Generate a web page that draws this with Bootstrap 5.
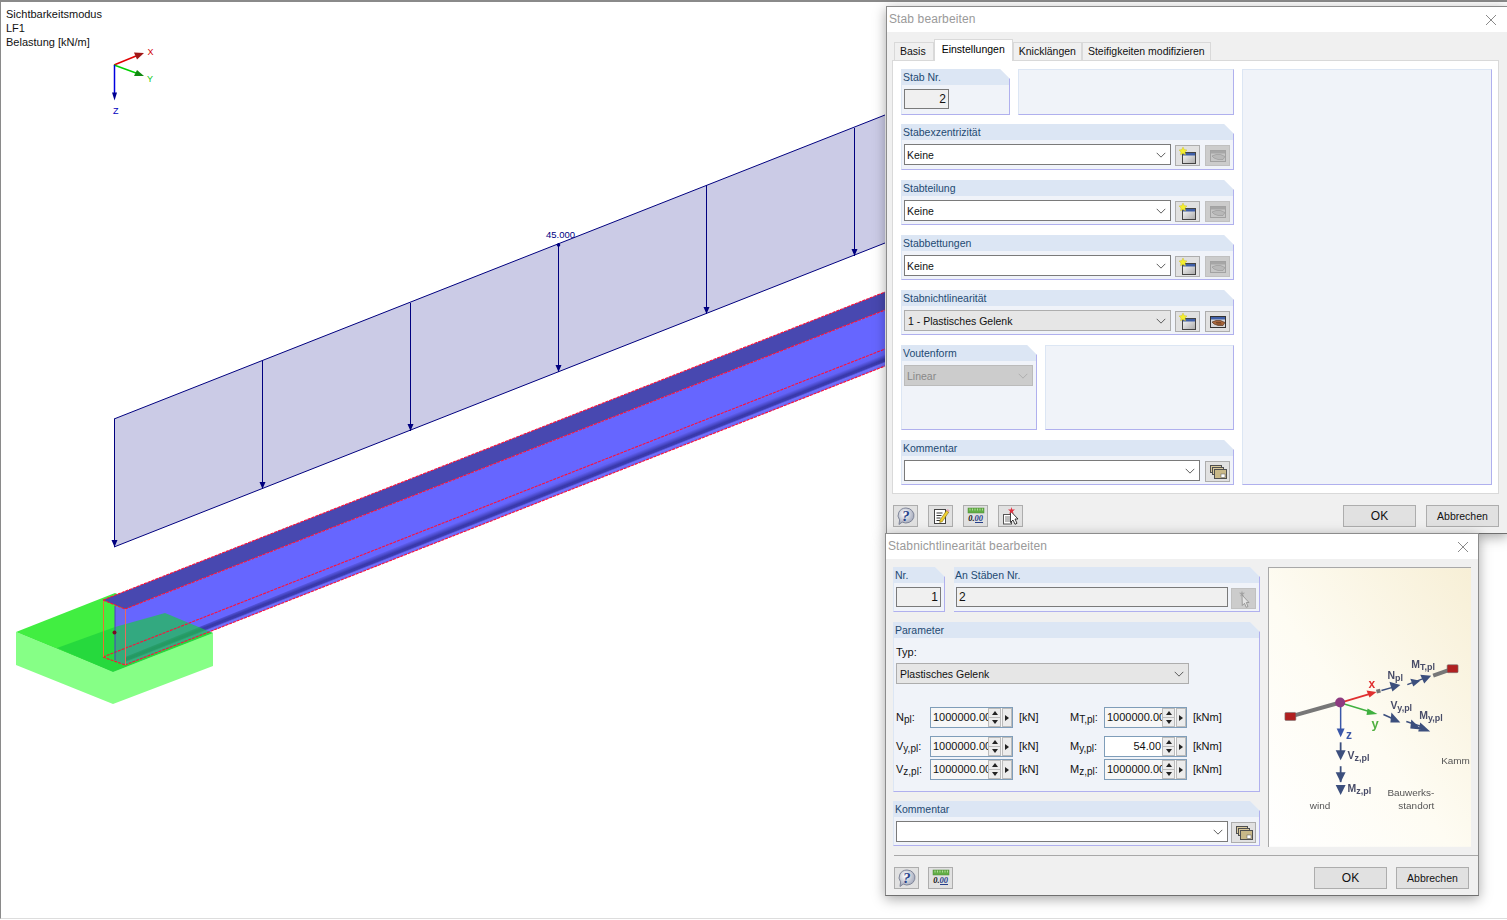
<!DOCTYPE html>
<html lang="de">
<head>
<meta charset="utf-8">
<title>Stab bearbeiten</title>
<link href="https://cdn.jsdelivr.net/npm/bootstrap@5.3.0/dist/css/bootstrap.min.css" rel="stylesheet">
<style>
html,body{height:920px;overflow:hidden;background:#fff;}
body{font-family:"Liberation Sans",Arial,sans-serif;font-size:11px;color:#111;line-height:1.2;}
.stage{position:relative;width:1507px;height:920px;overflow:hidden;}
.view3d{display:block;width:1507px;height:919px;border-left:1px solid #8a8a8a;border-top:2px solid #8a8a8a;border-bottom:1px solid #ddd;box-sizing:border-box;}
.vinfo{position:absolute;left:6px;top:7px;font-size:11px;line-height:14px;color:#111;}
.dlg{position:absolute;background:#f0f0f0;box-shadow:0 3px 12px rgba(0,0,0,.35);border:1px solid #8c8c8c;border-bottom-color:#6f6f6f;font-size:10.5px;}
.dlg-a{left:886px;top:6px;width:622px;height:528px;}
.dlg-b{left:885px;top:533px;width:594px;height:363px;}
.dlg-t{background:#fff;height:25px;padding:0 0 0 2px;color:#9a9a9a;font-size:12px;letter-spacing:.12px;}
.dlg-x{width:12px;height:12px;}
.dlg-a .dlg-x{margin-right:10px;}
.dlg-b .dlg-x{margin-right:9px;}
.dlg-a .dlg-c{padding:7px 8px 0 5px;}
.dlg-b .dlg-c{padding:8px 0 0 7px;}
.tabbar{border:0;margin-left:2px;height:21px;align-items:flex-end;}
.tabbar .nav-link{border:1px solid #d9d9d9;border-bottom:0;border-radius:0;background:#f0f0f0;color:#111;padding:0 5px;height:18px;line-height:17px;font-size:10.5px;margin:0;}
.tabbar .tab-first{padding:0 7px 0 5px;}
.tabbar .nav-link.active{background:#fff;height:22px;line-height:18px;padding:0 7px 0 7px;margin-bottom:-1px;position:relative;z-index:1;border-color:#d9d9d9;}
.tabbody{width:607px;height:434px;background:#fff;border:1px solid #d9d9d9;padding:8px 6px 8px 8px;}
.colmain{width:333px;}
.colside{width:250px;}
.fgrp{background:#f0f3f9;border-right:1px solid #b0b0ee;border-bottom:1px solid #b0b0ee;border-left:1px solid #dce6f4;clip-path:polygon(0 0,calc(100% - 10px) 0,100% 10px,100% 100%,0 100%);flex:none;}
.fgrp.noleft{border-left:0;}
.fgrp-h{height:16px;line-height:16px;background:#dce6f4;color:#1e4a72;padding-left:1px;font-size:10.5px;}
.fgrp-b{padding:4px 3px 0 2px;}
.fgrp-b .ibtn{margin-top:1px;height:21px;}
.blank{background:#f0f3f9;border:1px solid #dce6f4;border-right-color:#b0b0ee;border-bottom-color:#b0b0ee;flex:none;}
.h45{height:45px;}
.h46{height:46px;}
.h85{height:85px;}
.h170{height:170px;}
.w109{width:109px;}
.w216{width:216px;}
.w136{width:136px;}
.w189{width:189px;}
.w52{width:52px;}
.w306{width:306px;}
.w367{width:367px;}
.w293{width:293px;}
.mt9{margin-top:9px;}
.mt10{margin-top:10px;}
.gap3{gap:3px;}
.gap4{gap:4px;}
.gap5{gap:5px;}
.gap9{gap:9px;}
.gap10{gap:10px;}
.ml1{margin-left:1px;}
.form-select.combo,.form-control.fld{border-radius:0;border:1px solid #7a7a7a;height:21px;min-height:0;font-size:10.5px;line-height:1;color:#111;padding:1px 18px 0 2px;box-shadow:none;font-family:inherit;}
.form-select.combo{background-image:url("data:image/svg+xml,%3csvg xmlns='http://www.w3.org/2000/svg' viewBox='0 0 11 7'%3e%3cpath fill='none' stroke='%23444' d='M.5 1 5.500 6 10.500 1'/%3e%3c/svg%3e");background-size:10px 6px;background-position:right 4px center;background-color:#fff;}
.form-select.combo.grey{background-color:#e6e6e6;border-color:#adadad;padding-left:3px;}
.form-select.combo:disabled{background-image:url("data:image/svg+xml,%3csvg xmlns='http://www.w3.org/2000/svg' viewBox='0 0 11 7'%3e%3cpath fill='none' stroke='%23aaa' d='M.5 1 5.500 6 10.500 1'/%3e%3c/svg%3e");background-color:#ccc;border-color:#bbb;color:#888;}
.form-control.fld{background:#f0f0f0;padding:0 2px;height:20px;font-size:12px;}
.w45{width:45px;flex:none;}
.ibtn{width:25px;height:22px;padding:0;border-radius:0;border:1px solid #adadad;background:#e1e1e1;flex:none;display:flex;align-items:center;justify-content:center;}
.ibtn.off{background:#ccc;border-color:#c0c0c0;}
.ibtn svg{width:18px;height:18px;}
.cmdbtn{width:73px;height:22px;padding:0;border-radius:0;border:1px solid #adadad;background:#e1e1e1;color:#111;font-size:12px;line-height:20px;font-family:inherit;}
.cmdbtn.sm{font-size:10.5px;}
.foot-a{margin-top:11px;padding-left:1px;}
.typ-l{margin:7px 0 4px 0;height:14px;line-height:14px;font-size:11px;}
.pgrid{display:grid;grid-template-columns:34px 83px 57px 34px 83px 50px;grid-template-rows:27px 21px 21px;row-gap:2px;margin-top:23px;font-size:11px;}
.pgrid>span{height:21px;line-height:21px;}
.pgrid sub{font-size:10px;bottom:-.15em;}
.unit{padding-left:6px;}
.spin{width:83px;height:21px;border:1px solid #7f9db9;background:#fff;display:flex;}
.spin.dim{background:#f7f7f7;}
.spin-v{flex:1;overflow:hidden;font-size:11px;line-height:19px;padding-left:2px;white-space:nowrap;}
.spin-v.end{text-align:right;padding-right:1px;}
.spin-ud{width:13px;border:1px solid #bbb;display:flex;flex-direction:column;background:#ececec;flex:none;}
.spin-ud i{flex:1;display:flex;align-items:center;justify-content:center;font-style:normal;}
.spin-ud i+i{border-top:1px solid #bbb;}
.spin-r{width:10px;border:1px solid #bbb;margin-left:1px;background:#ececec;display:flex;align-items:center;justify-content:center;flex:none;}
.tri-u{border:3px solid transparent;border-top:0;border-bottom:4px solid #222;}
.tri-d{border:3px solid transparent;border-bottom:0;border-top:4px solid #222;}
.tri-r{border:3px solid transparent;border-right:0;border-left:4px solid #222;}
.pic{width:203px;height:280px;display:block;border-top:1px solid #a8a8a8;border-left:1px solid #a8a8a8;flex:none;}
.pic .soft{filter:blur(.35px);}
.sepline{border-top:1px solid #a8a8a8;margin:8px 0 0 1px;height:0;}
.foot-b{margin-top:11px;padding:0 9px 0 1px;}
</style>
</head>
<body>
<div class="stage">
  <svg class="view3d" viewBox="1 2 1506 916" xmlns="http://www.w3.org/2000/svg">
    <defs>
      <linearGradient id="flangeFade" gradientUnits="userSpaceOnUse" x1="885" y1="349" x2="890.800" y2="363.700">
        <stop offset="0" stop-color="#6666ff"/><stop offset=".3" stop-color="#6262f6"/><stop offset=".6" stop-color="#3838aa"/><stop offset=".72" stop-color="#3c3cb0"/><stop offset=".82" stop-color="#7070ff"/><stop offset="1" stop-color="#6868f0"/>
      </linearGradient>
    </defs>
    <!-- load plane -->
    <polygon points="114,419 885,115 885,243 114,547" fill="#cbcbe6"/>
    <g stroke="#00007f" fill="none" stroke-width="1">
      <path d="M114 419 885 115M114 547 885 243"/>
      <path d="M114.500 419V547M262.500 361V489M410.500 303V431M558.500 243V372M706.500 185V314M854.500 128V256"/>
    </g>
    <g fill="#00007f">
      <path d="M111.500 540h6l-3 7zM259.500 482h6l-3 7zM407.500 424h6l-3 7zM555.500 365h6l-3 7zM703.500 307h6l-3 7zM851.500 249h6l-3 7z"/>
      <circle cx="558.500" cy="245" r="1.800"/>
    </g>
    <text x="546" y="238" font-family="Liberation Sans" font-size="9.500" fill="#00007f">45.000</text>
    <!-- support block -->
    <polygon points="16,632 113,672 213,633 213,666 113,704 16,665" fill="#86ff86"/>
    <polygon points="16,632 115,593 213,633 113,672" fill="#41ee41"/>
    <!-- beam -->
    <polygon points="125,609 125,665 885,366 885,310" fill="#6666ff"/>
    <polygon points="103,600 125,609 885,310 885,292" fill="#4848b0"/>
    <polygon points="125,657 125,665 885,366 885,349" fill="url(#flangeFade)"/>
    <polygon points="115,606 125,609 125,665 115,661" fill="#6a6aee"/>
    <!-- translucent front of the block -->
    <polygon points="57,648 115,627 165,613 213,633 113,672" fill="rgb(25,206,60)" fill-opacity=".65"/>
    <!-- edges -->
    <g stroke="#ff1038" stroke-width="1.100" fill="none" stroke-dasharray="3 1">
      <path d="M103 600 885 292M125 609 885 310M103 657 885 349M125 665 885 366M103 600 125 609M103 657 125 665"/>
    </g>
    <path d="M103.500 601V657" stroke="#e97232" fill="none"/>
    <path d="M125.500 609V665" stroke="#ea6a5a" fill="none"/>
    <path d="M115 606V660" stroke="#4b3cc0" fill="none"/>
    <circle cx="114.500" cy="632.500" r="2" fill="#7a0a20"/>
    <!-- axis cross -->
    <path d="M114 65 136 56" stroke="#e00000" stroke-width="1.500"/><path d="M134 52.500 144 53 137 59.500z" fill="#a01818"/>
    <path d="M114 65 136 73" stroke="#00d000" stroke-width="1.500"/><path d="M137 70 144 76 134 76z" fill="#108a10"/>
    <path d="M114.500 65V94" stroke="#0000e0" stroke-width="1.500"/><path d="M112 92.500h5l-2.500 8z" fill="#000090"/>
    <g font-family="Liberation Sans" font-size="9">
      <text x="147.500" y="55" fill="#d00000">X</text>
      <text x="147" y="82" fill="#10c810">Y</text>
      <text x="113" y="114" fill="#0000c0">Z</text>
    </g>
  </svg>
  <div class="vinfo">Sichtbarkeitsmodus<br>LF1<br>Belastung [kN/m]</div>

  <svg width="0" height="0" class="d-block" xmlns="http://www.w3.org/2000/svg">
    <defs>
      <linearGradient id="wg" x1="0" y1="0" x2="1" y2="1"><stop offset="0" stop-color="#fff"/><stop offset="1" stop-color="#a9a9a9"/></linearGradient>
      <radialGradient id="bub" cx=".4" cy=".35" r=".7"><stop offset="0" stop-color="#fff"/><stop offset="1" stop-color="#9aa0b4"/></radialGradient>
      <symbol id="i-new" viewBox="0 0 18 18">
        <rect x="3.500" y="5.500" width="13" height="11" fill="url(#wg)" stroke="#444"/>
        <rect x="4" y="6" width="12" height="2.500" fill="#3f5fa8"/>
        <path d="M4 0 5.200 2.600 8 3 6 5 6.500 7.800 4 6.500 1.500 7.800 2 5 0 3 2.800 2.600z" fill="#f4ee30" stroke="#c8b820" stroke-width=".4"/>
      </symbol>
      <symbol id="i-hand" viewBox="0 0 18 18">
        <rect x="1.500" y="3.500" width="15" height="11" fill="#d8d8d8" stroke="#333"/>
        <rect x="2" y="4" width="14" height="2.500" fill="#3f5fa8"/>
        <path d="M3 9 7 7.500h4.500L16 9.500 14 12.500H9L5 11z" fill="#a8663a" stroke="#4a2a14" stroke-width=".6"/>
        <path d="M7 9.500h5M7.500 11h5" stroke="#4a2a14" stroke-width=".5"/>
      </symbol>
      <symbol id="i-hand-off" viewBox="0 0 18 18">
        <rect x="1.500" y="3.500" width="15" height="11" fill="#c6c6c6" stroke="#a2a2a2"/>
        <rect x="2" y="4" width="14" height="2.500" fill="#a6a6a6"/>
        <path d="M3 9 7 7.500h4.500L16 9.500 14 12.500H9L5 11z" fill="#b8b8b8" stroke="#969696" stroke-width=".6"/>
      </symbol>
      <symbol id="i-stack" viewBox="0 0 18 18">
        <rect x="1.500" y="2.500" width="11" height="7" fill="#d8c89c" stroke="#4f4f4f"/>
        <rect x="3.500" y="4.500" width="11" height="7" fill="#d8c89c" stroke="#4f4f4f"/>
        <rect x="5.500" y="6.500" width="12" height="9" fill="#c8b888" stroke="#4f4f4f"/>
        <rect x="12" y="11" width="4" height="3.500" fill="#fff" stroke="#555" stroke-width=".5"/>
      </symbol>
      <symbol id="i-help" viewBox="0 0 18 18">
        <path d="M9 1a8 7.500 0 1 1-3.800 14.100L2 17.500l.6-4.600A8 7.500 0 0 1 9 1z" fill="url(#bub)" stroke="#80869a"/>
        <text x="5" y="14" font-family="Liberation Serif" font-weight="700" font-style="italic" font-size="15" fill="#27408b">?</text>
      </symbol>
      <symbol id="i-note" viewBox="0 0 18 18">
        <rect x="2.500" y="2.500" width="11" height="14" fill="#fff" stroke="#444"/>
        <path d="M4.500 6h6M4.500 8.500h5M4.500 11h4M4.500 13.500h4" stroke="#333"/>
        <path d="M8 13 14.500 3.500 16.800 5 10.300 14.700 7.700 15.500z" fill="#f0cf30" stroke="#6a5a10" stroke-width=".5"/>
        <path d="M14.500 3.500 15.500 2 17.700 3.500 16.800 5z" fill="#e8a0b0"/>
      </symbol>
      <symbol id="i-zero" viewBox="0 0 18 18">
        <rect x="1" y="1" width="16" height="5" fill="#62ad45" stroke="#4c8a35" stroke-width=".5"/>
        <path d="M3 1.500v2M5.500 1.500v2M8 1.500v2M10.500 1.500v2M13 1.500v2M15.500 1.500v2" stroke="#d4f0c0" stroke-width=".7"/>
        <text x="1.200" y="14" font-family="Liberation Serif" font-weight="700" font-style="italic" font-size="8.500" fill="#111">0.<tspan fill="#27408b">00</tspan></text>
        <path d="M8 15.500h8" stroke="#27408b"/>
      </symbol>
      <symbol id="i-pin" viewBox="0 0 18 18">
        <rect x="1.500" y="7.500" width="8" height="9.500" fill="#fff" stroke="#555"/>
        <path d="M3 10h5M3 12h5M3 14h5" stroke="#555" stroke-width=".8"/>
        <path d="M8.500 4 16 12 13 12 15 16.300 13 17.300 11 13 8.500 15.500z" fill="#fff" stroke="#111" stroke-width=".8"/>
        <path d="M9.500 0 10.200 2.600 13 2.500 10.800 4.200 11.800 7 9.500 5.300 7.200 7 8.200 4.200 6 2.500 8.800 2.600z" fill="#e03040"/>
      </symbol>
      <symbol id="i-pick" viewBox="0 0 18 18">
        <path d="M7 5 14 12.500 11.300 12.500 13 16.500 11.200 17.300 9.500 13.300 7.300 15.500z" fill="#e4e4e4" stroke="#8c8c8c" stroke-width=".8"/>
        <path d="M7 .500 7.600 2.800 10.200 2.700 8 4.200 9 6.500 7 5 5 6.500 6 4.200 3.800 2.700 6.400 2.800z" fill="#a2a2a2"/>
      </symbol>
    </defs>
  </svg>

  <!-- Stab bearbeiten -->
  <section class="dlg dlg-a">
    <div class="dlg-t d-flex align-items-center justify-content-between">
      <span>Stab bearbeiten</span>
      <svg class="dlg-x" viewBox="0 0 12 12"><path d="M1 1 11 11M11 1 1 11" stroke="#8a8a8a" fill="none"/></svg>
    </div>
    <div class="dlg-c">
      <ul class="nav nav-tabs tabbar">
        <li class="nav-item"><a class="nav-link tab-first" href="#">Basis</a></li>
        <li class="nav-item"><a class="nav-link active" href="#">Einstellungen</a></li>
        <li class="nav-item"><a class="nav-link" href="#">Knicklängen</a></li>
        <li class="nav-item"><a class="nav-link" href="#">Steifigkeiten modifizieren</a></li>
      </ul>
      <div class="tabbody d-flex gap-2">
        <div class="colmain d-flex flex-column">
          <div class="d-flex gap-2 h45">
            <div class="fgrp w109 h46">
              <div class="fgrp-h">Stab Nr.</div>
              <div class="fgrp-b"><input class="form-control fld w45 text-end" value="2" readonly></div>
            </div>
            <div class="blank w216 h46"></div>
          </div>
          <div class="fgrp h46 mt10">
            <div class="fgrp-h">Stabexzentrizität</div>
            <div class="fgrp-b d-flex gap4">
              <select class="form-select combo"><option>Keine</option></select>
              <span class="ibtn"><svg><use href="#i-new"/></svg></span>
              <span class="ibtn off ml1"><svg><use href="#i-hand-off"/></svg></span>
            </div>
          </div>
          <div class="fgrp h45 mt10">
            <div class="fgrp-h">Stabteilung</div>
            <div class="fgrp-b d-flex gap4">
              <select class="form-select combo"><option>Keine</option></select>
              <span class="ibtn"><svg><use href="#i-new"/></svg></span>
              <span class="ibtn off ml1"><svg><use href="#i-hand-off"/></svg></span>
            </div>
          </div>
          <div class="fgrp h45 mt10">
            <div class="fgrp-h">Stabbettungen</div>
            <div class="fgrp-b d-flex gap4">
              <select class="form-select combo"><option>Keine</option></select>
              <span class="ibtn"><svg><use href="#i-new"/></svg></span>
              <span class="ibtn off ml1"><svg><use href="#i-hand-off"/></svg></span>
            </div>
          </div>
          <div class="fgrp h45 mt10">
            <div class="fgrp-h">Stabnichtlinearität</div>
            <div class="fgrp-b d-flex gap4">
              <select class="form-select combo grey"><option>1 - Plastisches Gelenk</option></select>
              <span class="ibtn"><svg><use href="#i-new"/></svg></span>
              <span class="ibtn ml1"><svg><use href="#i-hand"/></svg></span>
            </div>
          </div>
          <div class="d-flex gap-2 h85 mt10">
            <div class="fgrp w136 h85">
              <div class="fgrp-h">Voutenform</div>
              <div class="fgrp-b"><select class="form-select combo" disabled><option>Linear</option></select></div>
            </div>
            <div class="blank w189 h85"></div>
          </div>
          <div class="fgrp h45 mt10">
            <div class="fgrp-h">Kommentar</div>
            <div class="fgrp-b d-flex gap5">
              <select class="form-select combo"><option></option></select>
              <span class="ibtn"><svg><use href="#i-stack"/></svg></span>
            </div>
          </div>
        </div>
        <div class="colside blank"></div>
      </div>
      <div class="foot-a d-flex justify-content-between">
        <div class="d-flex gap10">
          <span class="ibtn"><svg><use href="#i-help"/></svg></span>
          <span class="ibtn"><svg><use href="#i-note"/></svg></span>
          <span class="ibtn"><svg><use href="#i-zero"/></svg></span>
          <span class="ibtn"><svg><use href="#i-pin"/></svg></span>
        </div>
        <div class="d-flex gap10">
          <button type="button" class="btn cmdbtn">OK</button>
          <button type="button" class="btn cmdbtn sm">Abbrechen</button>
        </div>
      </div>
    </div>
  </section>

  <!-- Stabnichtlinearität bearbeiten -->
  <section class="dlg dlg-b">
    <div class="dlg-t d-flex align-items-center justify-content-between">
      <span>Stabnichtlinearität bearbeiten</span>
      <svg class="dlg-x" viewBox="0 0 12 12"><path d="M1 1 11 11M11 1 1 11" stroke="#8a8a8a" fill="none"/></svg>
    </div>
    <div class="dlg-c">
      <div class="d-flex gap-2">
        <div class="w367 d-flex flex-column">
          <div class="d-flex h45">
            <div class="fgrp w52 h45">
              <div class="fgrp-h">Nr.</div>
              <div class="fgrp-b"><input class="form-control fld w45 text-end" value="1" readonly></div>
            </div>
            <div class="fgrp noleft w306 h45 ms-auto">
              <div class="fgrp-h">An Stäben Nr.</div>
              <div class="fgrp-b d-flex gap3">
                <input class="form-control fld" value="2" readonly>
                <span class="ibtn off"><svg><use href="#i-pick"/></svg></span>
              </div>
            </div>
          </div>
          <div class="fgrp h170 mt10">
            <div class="fgrp-h">Parameter</div>
            <div class="fgrp-b pt-0">
              <div class="typ-l">Typ:</div>
              <select class="form-select combo grey w293"><option>Plastisches Gelenk</option></select>
              <div class="pgrid">
                <span>N<sub>pl</sub>:</span>
                <div class="spin dim"><div class="spin-v">1000000.00</div><div class="spin-ud"><i><b class="tri-u"></b></i><i><b class="tri-d"></b></i></div><div class="spin-r"><b class="tri-r"></b></div></div>
                <span class="unit">[kN]</span>
                <span>M<sub>T,pl</sub>:</span>
                <div class="spin dim"><div class="spin-v">1000000.00</div><div class="spin-ud"><i><b class="tri-u"></b></i><i><b class="tri-d"></b></i></div><div class="spin-r"><b class="tri-r"></b></div></div>
                <span class="unit">[kNm]</span>
                <span>V<sub>y,pl</sub>:</span>
                <div class="spin dim"><div class="spin-v">1000000.00</div><div class="spin-ud"><i><b class="tri-u"></b></i><i><b class="tri-d"></b></i></div><div class="spin-r"><b class="tri-r"></b></div></div>
                <span class="unit">[kN]</span>
                <span>M<sub>y,pl</sub>:</span>
                <div class="spin"><div class="spin-v end">54.00</div><div class="spin-ud"><i><b class="tri-u"></b></i><i><b class="tri-d"></b></i></div><div class="spin-r"><b class="tri-r"></b></div></div>
                <span class="unit">[kNm]</span>
                <span>V<sub>z,pl</sub>:</span>
                <div class="spin dim"><div class="spin-v">1000000.00</div><div class="spin-ud"><i><b class="tri-u"></b></i><i><b class="tri-d"></b></i></div><div class="spin-r"><b class="tri-r"></b></div></div>
                <span class="unit">[kN]</span>
                <span>M<sub>z,pl</sub>:</span>
                <div class="spin dim"><div class="spin-v">1000000.00</div><div class="spin-ud"><i><b class="tri-u"></b></i><i><b class="tri-d"></b></i></div><div class="spin-r"><b class="tri-r"></b></div></div>
                <span class="unit">[kNm]</span>
              </div>
            </div>
          </div>
          <div class="fgrp h45 mt9">
            <div class="fgrp-h">Kommentar</div>
            <div class="fgrp-b d-flex gap3">
              <select class="form-select combo"><option></option></select>
              <span class="ibtn"><svg><use href="#i-stack"/></svg></span>
            </div>
          </div>
        </div>
        <svg class="pic" viewBox="1268 567 203 280" xmlns="http://www.w3.org/2000/svg" font-family="Liberation Sans">
          <defs>
            <linearGradient id="cream" x1="1" y1="0" x2="0" y2="1"><stop offset="0" stop-color="#f7efd6"/><stop offset=".55" stop-color="#fefcf3"/><stop offset="1" stop-color="#fff"/></linearGradient>
          </defs>
          <rect x="1268" y="567" width="203" height="280" fill="url(#cream)"/>
          <g class="soft">
          <path d="M1290 716 1336 703M1376 691 1380 690M1433 675 1450 669" stroke="#777" stroke-width="4" fill="none"/>
          <rect x="1284" y="712" width="11" height="8" rx="1" fill="#b02020" stroke="#777" stroke-width=".6"/>
          <rect x="1447" y="664" width="11" height="8" rx="1" fill="#b02020" stroke="#777" stroke-width=".6"/>
          <path d="M1340 702 1372 692.500" stroke="#e03030" stroke-width="1.800"/><path d="M1366 690 1376 691.500 1369 697z" fill="#e03030"/>
          <path d="M1342 703 1372 712" stroke="#40b040" stroke-width="1.400"/><path d="M1367 708 1377 713.500 1366 714.500z" fill="#40b040"/>
          <path d="M1340 705V734" stroke="#3a57a8" stroke-width="1.500"/><path d="M1336 728h8l-4 9z" fill="#3a57a8"/>
          <circle cx="1339.500" cy="702" r="5" fill="#8e3a80"/>
          <g fill="#3c4f7d" stroke="#3c4f7d">
            <path d="M1381 690 1393 686.500" stroke-width="1.500" fill="none"/><path d="M1389 681 1400 684.500 1392 691z" stroke="none"/>
            <path d="M1407 684 1423 678" stroke-width="1.500" fill="none"/><path d="M1410 678 1420 680 1413 686zM1420 674 1431 675 1424 683z" stroke="none"/>
            <path d="M1383 714 1392 718" stroke-width="1.500" fill="none"/><path d="M1391 712 1400 722 1390 722z" stroke="none"/>
            <path d="M1406 721 1424 727" stroke-width="1.500" fill="none"/><path d="M1411 719 1421 729 1410 728zM1420 722 1430 731 1418 731z" stroke="none"/>
            <path d="M1340 742V752" stroke-width="1.800" fill="none"/><path d="M1335 750h10l-5 10z" stroke="none"/>
            <path d="M1340 766V782" stroke-width="1.800" fill="none"/><path d="M1335 772h10l-5 10zM1335 785h10l-5 10z" stroke="none"/>
          </g>
          <g font-weight="700" font-size="11">
            <text x="1368" y="687" fill="#e03030" font-size="12">x</text>
            <text x="1371" y="728" fill="#50b040" font-size="13">y</text>
            <text x="1345.500" y="739" fill="#3a57a8" font-size="12">z</text>
          </g>
          <g font-weight="700" font-size="10.500" fill="#484c68">
            <text x="1387" y="678">N<tspan font-size="9" dy="2">pl</tspan></text>
            <text x="1411" y="667">M<tspan font-size="9" dy="2">T,pl</tspan></text>
            <text x="1390" y="709">V<tspan font-size="9" dy="2">y,pl</tspan></text>
            <text x="1419" y="719">M<tspan font-size="9" dy="2">y,pl</tspan></text>
            <text x="1347" y="759">V<tspan font-size="9" dy="2">z,pl</tspan></text>
            <text x="1347" y="792">M<tspan font-size="9" dy="2">z,pl</tspan></text>
          </g>
          <g font-size="10" fill="#555">
            <text x="1309" y="809">wind</text>
            <text x="1387" y="796">Bauwerks-</text>
            <text x="1398" y="809">standort</text>
            <text x="1441" y="764">Kamm</text>
          </g>
          </g>
        </svg>
      </div>
      <div class="sepline"></div>
      <div class="foot-b d-flex justify-content-between">
        <div class="d-flex gap9">
          <span class="ibtn"><svg><use href="#i-help"/></svg></span>
          <span class="ibtn"><svg><use href="#i-zero"/></svg></span>
        </div>
        <div class="d-flex gap9">
          <button type="button" class="btn cmdbtn">OK</button>
          <button type="button" class="btn cmdbtn sm">Abbrechen</button>
        </div>
      </div>
    </div>
  </section>
</div>
<script src="https://cdn.jsdelivr.net/npm/bootstrap@5.3.0/dist/js/bootstrap.bundle.min.js"></script>
</body>
</html>
